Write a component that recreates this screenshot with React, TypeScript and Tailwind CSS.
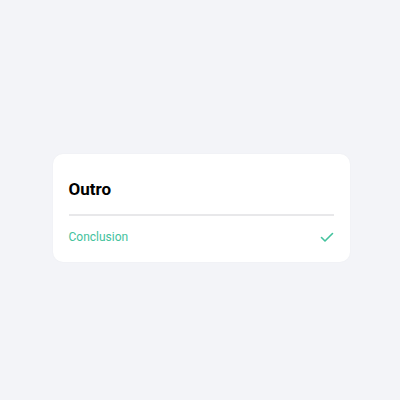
import React from "react";

export default function App() {
  return (
    <div
      className="min-h-screen bg-[#f3f4f8] flex items-center justify-center pt-4 pl-[2px]"
      style={{ fontFamily: "Roboto, 'Noto Sans', sans-serif" }}
    >
      <div className="w-[297px] bg-white rounded-[10px] px-4 pt-[25px] pb-[6px] shadow-[0_0_2px_rgba(0,0,0,0.04)]">
        <div className="text-[17px] leading-5 font-bold text-black pb-[15px] border-b-2 border-[#e8e8ea]">
          Outro
        </div>
        <div className="flex items-center justify-between pt-[13px] pb-[11px]">
          <span className="text-xs leading-4 text-[#43c29d]">Conclusion</span>
          <svg width="16" height="16" viewBox="0 0 16 16" fill="none" className="mr-[-1px]">
            <path
              d="M2.5 8.5 L6 12 L13.5 4.5"
              stroke="#43c29d"
              strokeWidth="1.6"
              strokeLinecap="round"
              strokeLinejoin="round"
            />
          </svg>
        </div>
      </div>
    </div>
  );
}
